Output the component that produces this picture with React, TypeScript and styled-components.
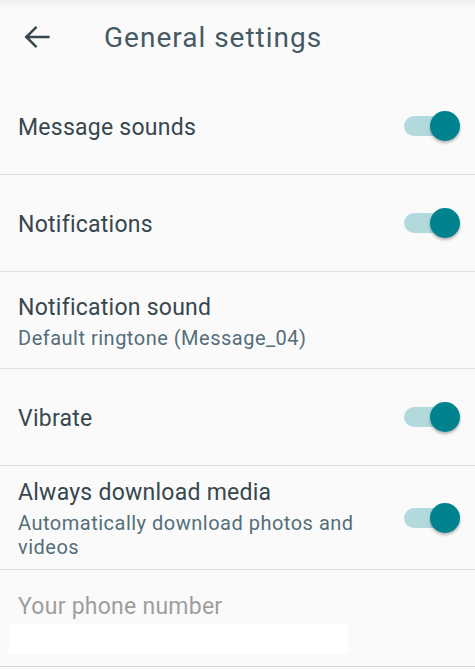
import React from 'react'
import styled, { createGlobalStyle } from 'styled-components'

const GlobalStyle = createGlobalStyle`
  html, body {
    margin: 0;
    padding: 0;
    background-color: #fafafa;
  }

  body {
    font-family: Roboto, 'Noto Sans', sans-serif;
  }
`

type Setting = {
  title: string
  subtitle?: string
  toggle?: boolean
}

const settings: Setting[] = [
  { title: 'Message sounds', toggle: true },
  { title: 'Notifications', toggle: true },
  { title: 'Notification sound', subtitle: 'Default ringtone (Message_04)' },
  { title: 'Vibrate', toggle: true },
  { title: 'Always download media', subtitle: 'Automatically download photos and videos', toggle: true },
]

function BackArrow() {
  return (
    <svg width="32" height="32" viewBox="0 0 24 24" fill="none">
      <path d="M20.5 12H4M11 5l-7 7 7 7" stroke="#37474f" strokeWidth="1.9" strokeLinecap="square" />
    </svg>
  )
}

function App() {
  return (
    <>
      <GlobalStyle />
      <SPage>
        <SHeader>
          <SBackButton>
            <BackArrow />
          </SBackButton>
          <STitle>General settings</STitle>
        </SHeader>
        {settings.map((s) => (
          <SRow key={s.title}>
            <STextBlock>
              <SRowTitle>{s.title}</SRowTitle>
              {s.subtitle && <SRowSubtitle>{s.subtitle}</SRowSubtitle>}
            </STextBlock>
            {s.toggle && (
              <SSwitch>
                <STrack />
                <SThumb />
              </SSwitch>
            )}
          </SRow>
        ))}
        <SInputRow>
          <SLabel>Your phone number</SLabel>
          <SInput />
        </SInputRow>
      </SPage>
    </>
  )
}

export default App

const SPage = styled.div`
  background-color: #fafafa;
  min-height: 670px;
  width: 475px;
`

const SHeader = styled.header`
  align-items: center;
  background: linear-gradient(to bottom, #efefef 0px, #fafafa 8px);
  box-sizing: border-box;
  display: flex;
  height: 78px;
  padding: 0 0 4px 0;
`

const SBackButton = styled.div`
  align-items: center;
  display: flex;
  justify-content: center;
  margin-left: 21px;
  width: 32px;
  height: 32px;
`

const STitle = styled.h1`
  color: #455a64;
  font-size: 28px;
  font-weight: 400;
  letter-spacing: 1px;
  margin: 0 0 0 51px;
`

const SRow = styled.div`
  align-items: center;
  border-bottom: 1px solid #e0e0e0;
  box-sizing: border-box;
  display: flex;
  min-height: 97px;
  padding: 10px 15px 10px 18px;
`

const STextBlock = styled.div`
  display: flex;
  flex: 1;
  flex-direction: column;
  gap: 5px;
  margin-right: 24px;
  padding-top: 3px;
`

const SRowTitle = styled.div`
  color: #37474f;
  font-size: 23px;
  letter-spacing: 0.25px;
  line-height: 27px;
`

const SRowSubtitle = styled.div`
  color: #546e7a;
  font-size: 20px;
  letter-spacing: 0.5px;
  line-height: 24px;
`

const SSwitch = styled.div`
  height: 30px;
  position: relative;
  width: 56px;
`

const STrack = styled.div`
  background-color: #b2dadd;
  border-radius: 10px;
  height: 20px;
  left: 0;
  position: absolute;
  top: 5px;
  width: 48px;
`

const SThumb = styled.div`
  background-color: #00838f;
  border-radius: 50%;
  box-shadow: 0 2px 3px rgba(0, 0, 0, 0.3);
  height: 30px;
  position: absolute;
  right: 0;
  top: 0;
  width: 30px;
`

const SInputRow = styled.div`
  border-bottom: 1px solid #d6d6d6;
  box-sizing: border-box;
  display: flex;
  flex-direction: column;
  gap: 4px;
  height: 97px;
  padding: 23px 0 0 9px;
`

const SLabel = styled.div`
  color: #9e9e9e;
  font-size: 23px;
  letter-spacing: 0.25px;
  line-height: 27px;
  padding-left: 9px;
`

const SInput = styled.div`
  background-color: #ffffff;
  height: 30px;
  width: 339px;
`
